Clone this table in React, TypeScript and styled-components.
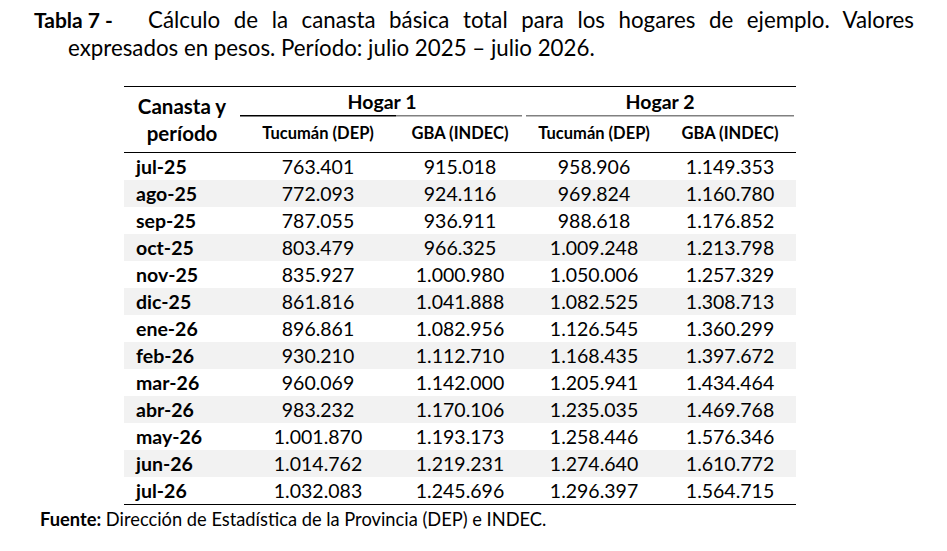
import React from 'react';
import styled, { createGlobalStyle } from 'styled-components';

const GlobalStyle = createGlobalStyle`
  html, body {
    margin: 0;
    padding: 0;
    background: #fff;
  }
  body {
    font-family: Lato, 'Liberation Sans', sans-serif;
    color: #000;
  }
`;

const Page = styled.div`
  width: 947px;
  height: 551px;
  padding-top: 6px;
  box-sizing: border-box;
  overflow: hidden;
`;

const Caption = styled.p`
  margin: 0 33px 0 68px;
  text-indent: -34px;
  text-align: justify;
  font-size: 22.3px;
  line-height: 28px;
`;

const CaptionLabel = styled.b`
  display: inline-block;
  width: 114px;
  text-indent: 0;
  font-size: 21px;
  font-weight: 700;
`;

const Table = styled.table`
  margin: 24px 0 0 124px;
  width: 672px;
  border-collapse: separate;
  border-spacing: 0;
  table-layout: fixed;
  font-size: 19.5px;
  line-height: 27px;
`;

const HeadCell = styled.th<{ $top?: boolean; $bottom?: boolean }>`
  padding: 0;
  font-weight: 700;
  text-align: center;
  vertical-align: middle;
  border-top: ${({ $top }) => ($top ? '1.5px solid #000' : 'none')};
  border-bottom: ${({ $bottom }) => ($bottom ? '1.5px solid #000' : 'none')};
`;

const CornerCell = styled(HeadCell)`
  font-size: 20.5px;
`;

const GroupCell = styled(HeadCell)`
  height: 27px;
  vertical-align: top;
  padding-top: 1px;
`;

const SubCell = styled(HeadCell)<{ $line: 'dark' | 'gray-left' | 'gray-right' }>`
  height: 37px;
  font-size: 16.5px;
  background-image: linear-gradient(
    ${({ $line }) => ($line === 'dark' ? '#000, #000' : '#808080, #808080')}
  );
  background-repeat: no-repeat;
  background-size: ${({ $line }) => ($line === 'dark' ? '100%' : 'calc(100% - 2px)')} 1.5px;
  background-position: ${({ $line }) => ($line === 'gray-right' ? '2px 0' : '0 0')};
`;

const Row = styled.tr<{ $shade: boolean }>`
  background: ${({ $shade }) => ($shade ? '#f2f2f2' : 'transparent')};
`;

const Cell = styled.td<{ $last: boolean }>`
  padding: 0;
  height: 27px;
  text-align: center;
  border-bottom: ${({ $last }) => ($last ? '1.5px solid #000' : 'none')};
`;

const LabelCell = styled(Cell)`
  text-align: left;
  padding-left: 12px;
  font-weight: 700;
`;

const Source = styled.p`
  margin: 2px 0 0 40px;
  font-size: 18.3px;
  line-height: 24px;
`;

const rows: [string, string, string, string, string][] = [
  ['jul-25', '763.401', '915.018', '958.906', '1.149.353'],
  ['ago-25', '772.093', '924.116', '969.824', '1.160.780'],
  ['sep-25', '787.055', '936.911', '988.618', '1.176.852'],
  ['oct-25', '803.479', '966.325', '1.009.248', '1.213.798'],
  ['nov-25', '835.927', '1.000.980', '1.050.006', '1.257.329'],
  ['dic-25', '861.816', '1.041.888', '1.082.525', '1.308.713'],
  ['ene-26', '896.861', '1.082.956', '1.126.545', '1.360.299'],
  ['feb-26', '930.210', '1.112.710', '1.168.435', '1.397.672'],
  ['mar-26', '960.069', '1.142.000', '1.205.941', '1.434.464'],
  ['abr-26', '983.232', '1.170.106', '1.235.035', '1.469.768'],
  ['may-26', '1.001.870', '1.193.173', '1.258.446', '1.576.346'],
  ['jun-26', '1.014.762', '1.219.231', '1.274.640', '1.610.772'],
  ['jul-26', '1.032.083', '1.245.696', '1.296.397', '1.564.715'],
];

export default function App() {
  return (
    <Page>
      <GlobalStyle />
      <Caption>
        <CaptionLabel>Tabla 7 -</CaptionLabel>
        Cálculo de la canasta básica total para los hogares de ejemplo. Valores expresados en
        pesos. Período: julio 2025 – julio 2026.
      </Caption>
      <Table>
        <colgroup>
          <col style={{ width: 116 }} />
          <col style={{ width: 156 }} />
          <col style={{ width: 128 }} />
          <col style={{ width: 140 }} />
          <col style={{ width: 132 }} />
        </colgroup>
        <thead>
          <tr>
            <CornerCell rowSpan={2} $top $bottom>
              Canasta y
              <br />
              período
            </CornerCell>
            <GroupCell colSpan={2} $top>
              Hogar 1
            </GroupCell>
            <GroupCell colSpan={2} $top>
              Hogar 2
            </GroupCell>
          </tr>
          <tr>
            <SubCell $line="dark" $bottom>
              Tucumán (DEP)
            </SubCell>
            <SubCell $line="gray-left" $bottom>
              GBA (INDEC)
            </SubCell>
            <SubCell $line="gray-right" $bottom>
              Tucumán (DEP)
            </SubCell>
            <SubCell $line="gray-left" $bottom>
              GBA (INDEC)
            </SubCell>
          </tr>
        </thead>
        <tbody>
          {rows.map(([label, ...values], i) => (
            <Row key={label} $shade={i % 2 === 1}>
              <LabelCell $last={i === rows.length - 1}>{label}</LabelCell>
              {values.map((v, j) => (
                <Cell key={j} $last={i === rows.length - 1}>
                  {v}
                </Cell>
              ))}
            </Row>
          ))}
        </tbody>
      </Table>
      <Source>
        <b>Fuente:</b> Dirección de Estadística de la Provincia (DEP) e INDEC.
      </Source>
    </Page>
  );
}
